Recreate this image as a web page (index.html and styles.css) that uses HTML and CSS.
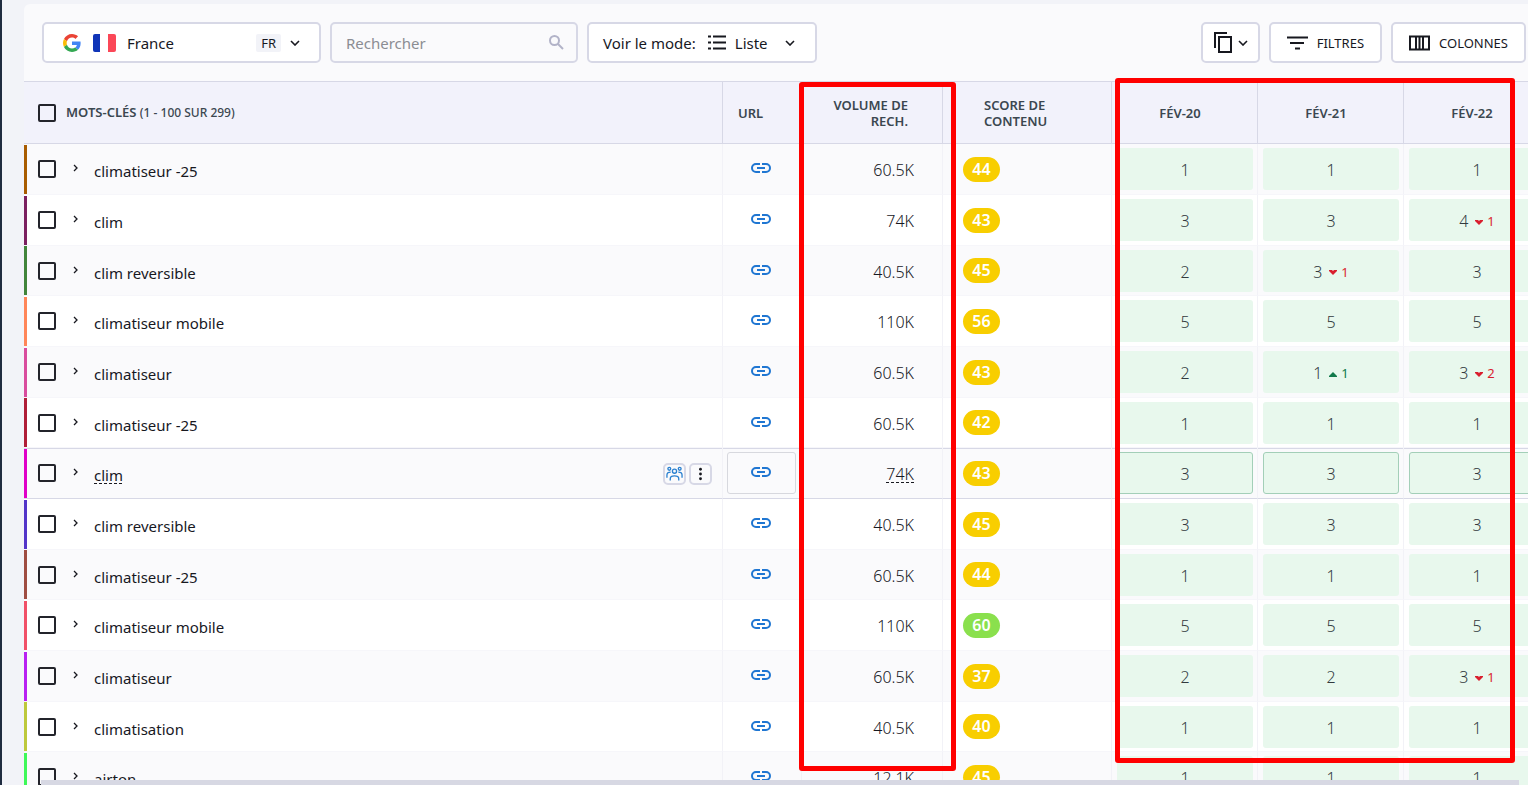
FILE: index.html
```html
<!DOCTYPE html>
<html lang="fr">
<head>
<meta charset="utf-8">
<title>Mots-clés</title>
<link rel="stylesheet" href="styles.css">
</head>
<body>
<svg class="sprite" aria-hidden="true">
  <symbol id="link" viewBox="0 0 20 10"><path d="M9 1H5a4 4 0 0 0 0 8h4M11 1h4a4 4 0 0 1 0 8h-4M6 5h8" fill="none" stroke="currentColor" stroke-width="2"/></symbol>
  <symbol id="right" viewBox="0 0 6 8"><path d="M1 1l3 3-3 3" fill="none" stroke="currentColor" stroke-width="1.3"/></symbol>
  <symbol id="down" viewBox="0 0 10 6"><path d="M1 1l4 4 4-4" fill="none" stroke="currentColor" stroke-width="1.6"/></symbol>
  <symbol id="fall" viewBox="0 0 8 5"><path d="M0 0h3l1 1 1-1h3v1L4 5 0 1z" fill="currentColor"/></symbol>
  <symbol id="rise" viewBox="0 0 8 5"><path d="M0 5h8V4L4 0 0 4z" fill="currentColor"/></symbol>
</svg>
<main class="panel">
  <form class="toolbar">
    <div class="field country">
      <svg class="google" viewBox="0 0 48 48" aria-hidden="true"><path fill="#ea4335" d="M24 9.500c3.540 0 6.710 1.220 9.210 3.600l6.850-6.850C35.900 2.380 30.470 0 24 0 14.620 0 6.510 5.380 2.560 13.220l7.980 6.190C12.430 13.720 17.740 9.500 24 9.500z"/><path fill="#4285f4" d="M46.980 24.550c0-1.570-.15-3.090-.38-4.550H24v9.020h12.940c-.58 2.960-2.260 5.480-4.780 7.180l7.730 6c4.510-4.180 7.090-10.360 7.090-17.650z"/><path fill="#fbbc05" d="M10.530 28.590A14.500 14.500 0 0 1 9.770 24c0-1.600.27-3.140.76-4.590l-7.980-6.190A24 24 0 0 0 0 24c0 3.880.92 7.540 2.560 10.780z"/><path fill="#34a853" d="M24 48c6.480 0 11.930-2.130 15.890-5.810l-7.730-6c-2.150 1.450-4.920 2.300-8.160 2.300-6.260 0-11.570-4.220-13.470-9.910l-7.980 6.190C6.510 42.620 14.620 48 24 48z"/></svg>
      <svg class="flag" viewBox="0 0 23 18" aria-hidden="true"><rect width="23" height="18" rx="2" fill="#fff"/><path d="M7 0H2a2 2 0 0 0-2 2v14a2 2 0 0 0 2 2h5z" fill="#1035b8"/><path d="M15 0h6a2 2 0 0 1 2 2v14a2 2 0 0 1-2 2h-6z" fill="#fb4757"/></svg>
      <select aria-label="Pays"><option>France</option></select>
      <span class="code">FR</span>
      <svg class="caret" aria-hidden="true"><use href="#down"/></svg>
    </div>
    <div class="field search">
      <input type="search" placeholder="Rechercher" aria-label="Rechercher">
      <svg class="loupe" viewBox="0 0 15 15" aria-hidden="true"><circle cx="5.500" cy="5.500" r="4.500"/><path d="M9 9l5 5"/></svg>
    </div>
    <div class="field mode">
      <label for="mode">Voir le mode:</label>
      <svg class="list" viewBox="0 0 18 15" aria-hidden="true"><path d="M0 1.500h3M5 1.500h13M0 7.500h3M5 7.500h13M0 13.500h3M5 13.500h13"/></svg>
      <select id="mode"><option>Liste</option></select>
      <svg class="caret" aria-hidden="true"><use href="#down"/></svg>
    </div>
    <div class="actions">
      <button type="button" class="field copy" aria-label="Copier"><svg class="sheets" viewBox="0 0 18 21" aria-hidden="true"><path d="M1 16V1h12"/><rect x="5" y="5" width="12" height="15"/></svg><svg class="caret" aria-hidden="true"><use href="#down"/></svg></button>
      <button type="button" class="field"><svg class="filter" viewBox="0 0 21 14" aria-hidden="true"><path d="M0 1.500h21M3 7h14M8 12.500h5"/></svg>FILTRES</button>
      <button type="button" class="field"><svg class="cols" viewBox="0 0 21 16" aria-hidden="true"><path d="M1 1.500h19v13H1zM7 1v14M14 1v14M10.500 1v14"/></svg>COLONNES</button>
    </div>
  </form>
  <div class="scroller">
    <table>
      <colgroup><col><col class="w-url"><col class="w-volume"><col class="w-score"><col class="w-date"><col class="w-date"><col class="w-date"></colgroup>
      <thead><tr>
        <th><div class="all"><input type="checkbox" aria-label="Tout sélectionner"><span>MOTS-CLÉS <small>(1 - 100 SUR 299)</small></span></div></th>
        <th class="h-url">URL</th>
        <th class="h-volume">VOLUME DE RECH.</th>
        <th class="h-score">SCORE DE<br>CONTENU</th>
        <th class="h-date">FÉV-20</th><th class="h-date">FÉV-21</th><th class="h-date">FÉV-22</th>
      </tr></thead>
      <tbody id="rows"></tbody>
    </table>
  </div>
</main>
<div class="scrollbar"></div>
<div class="mark mark-volume"></div>
<div class="mark mark-dates"></div>
<script src="rows.js"></script>
</body>
</html>
```

FILE: rows.js
```js
const rows = [
  ["climatiseur -25", "60.5K", 44, ["1", "1", "1"], "#a85c00"],
  ["clim", "74K", 43, ["3", "3", "4 -1"], "#7b2060"],
  ["clim reversible", "40.5K", 45, ["2", "3 -1", "3"], "#41853b"],
  ["climatiseur mobile", "110K", 56, ["5", "5", "5"], "#ff8659"],
  ["climatiseur", "60.5K", 43, ["2", "1 +1", "3 -2"], "#d94c9e"],
  ["climatiseur -25", "60.5K", 42, ["1", "1", "1"], "#b01e38"],
  ["clim", "74K", 43, ["3", "3", "3"], "#e000c8"],
  ["clim reversible", "40.5K", 45, ["3", "3", "3"], "#5335c9"],
  ["climatiseur -25", "60.5K", 44, ["1", "1", "1"], "#9f4d42"],
  ["climatiseur mobile", "110K", 60, ["5", "5", "5"], "#f15068"],
  ["climatiseur", "60.5K", 37, ["2", "2", "3 -1"], "#b820f2"],
  ["climatisation", "40.5K", 40, ["1", "1", "1"], "#bdc93c"],
  ["airton", "12.1K", 45, ["1", "1", "1"], "#3ff859"]
];
const active = 6;
const tools = `<button type="button" class="tool" aria-label="Concurrents"><svg viewBox="0 0 18 16"><g fill="none" stroke="#2a80d0" stroke-width="1.400"><circle cx="3.500" cy="2.500" r="1.500"/><circle cx="14.500" cy="2.500" r="1.500"/><circle cx="9" cy="5" r="2.200"/><path d="M4.500 15v-2q0-3 4.500-3t4.500 3v2M1 12V9q0-3 4-3M17 12V9q0-3-4-3"/></g></svg></button>
<button type="button" class="tool" aria-label="Plus"><svg viewBox="0 0 18 16"><g fill="#17181f"><circle cx="9" cy="3" r="1.500"/><circle cx="9" cy="8" r="1.500"/><circle cx="9" cy="13" r="1.500"/></g></svg></button>`;

function rank(value) {
  const [position, change] = value.split(" ");
  if (!change) return position;
  const kind = change[0] === "-" ? "fall" : "rise";
  return `${position}<span class="change ${kind}"><svg aria-hidden="true"><use href="#${kind}"/></svg>${change.slice(1)}</span>`;
}

document.getElementById("rows").innerHTML = rows.map(([name, volume, score, dates, color], i) => `
<tr${i === active ? ' class="active"' : ""}>
  <td><div class="name"><i style="background:${color}"></i><input type="checkbox" aria-label="${name}"><button type="button" class="expand" aria-label="Développer"><svg aria-hidden="true"><use href="#right"/></svg></button><span class="text">${name}</span>${i === active ? `<div class="tools">${tools}</div>` : ""}</div></td>
  <td><a class="url" href="#" aria-label="URL"><svg aria-hidden="true"><use href="#link"/></svg></a></td>
  <td class="c-volume"><span class="text">${volume}</span></td>
  <td class="c-score"><span class="score${score >= 60 ? " good" : ""}">${score}</span></td>
  ${dates.map(d => `<td><div class="rank">${rank(d)}</div></td>`).join("")}
</tr>`).join("");
```

FILE: styles.css
```css
* { box-sizing: border-box; }
html, body { height: 100%; }
body {
  margin: 0;
  padding: 4px 0 0 22px;
  border-left: 2px solid #1f2c40;
  background: #f2f3f8;
  color: #17181f;
  font: 15px/20px "Noto Sans", sans-serif;
  overflow: hidden;
  position: relative;
}
svg { display: block; flex: none; }
button, input, select { font: inherit; color: inherit; }
button { cursor: pointer; }
.sprite { display: none; }
.panel {
  height: 100%;
  display: flex;
  flex-direction: column;
  background: #fafafc;
  border-radius: 6px 0 0 0;
  overflow: hidden;
}

.toolbar { display: flex; gap: 9px; padding: 18px 2px 18px 18px; }
.field {
  display: flex;
  align-items: center;
  height: 41px;
  border: 2px solid #d7d8e6;
  border-radius: 5px;
  background: #fff;
}
.field select {
  appearance: none;
  border: 0;
  padding: 0;
  background: none;
  outline: 0;
}
.caret { width: 10px; height: 6px; }
.country { width: 279px; padding: 0 19px 0 19px; }
.country select { flex: 1; margin-left: 11px; }
.google { width: 18px; height: 18px; }
.flag { width: 23px; height: 18px; margin-left: 12px; }
.code {
  margin-right: 9px;
  padding: 0 5px;
  border-radius: 2px;
  background: #f2f3f8;
  font-size: 13px;
  line-height: 18px;
}
.search { width: 248px; padding: 0 12px 0 14px; background: #fafafc; }
.search input {
  flex: 1;
  min-width: 0;
  border: 0;
  padding: 0;
  background: none;
  outline: 0;
}
.search input::placeholder { color: #8b8d93; opacity: 1; }
.loupe { width: 15px; height: 15px; fill: none; stroke: #b2b3c8; stroke-width: 2; }
.mode { width: 230px; padding: 0 20px 0 14px; }
.mode select { flex: 1; margin-left: 9px; }
.list { width: 18px; height: 15px; margin-left: 12px; stroke: #17181f; stroke-width: 2; }
.actions { display: flex; gap: 9px; margin-left: auto; }
.actions .field { padding: 0 16px; font-size: 13px; gap: 9px; }
.actions .copy { padding: 0 10px 0 11px; gap: 6px; }
.sheets { width: 18px; height: 21px; fill: none; stroke: #17181f; stroke-width: 2; }
.filter { width: 21px; height: 14px; stroke: #17181f; stroke-width: 2; }
.cols { width: 21px; height: 16px; fill: none; stroke: #17181f; stroke-width: 2; }

.scroller { flex: 1; overflow: hidden; }
table {
  width: calc(100% + 22px);
  table-layout: fixed;
  border-collapse: separate;
  border-spacing: 0;
}
.w-url { width: 79px; }
.w-volume { width: 141px; }
.w-score { width: 169px; }
.w-date { width: 146px; }
th {
  height: 63px;
  padding: 0;
  border: solid #d7d8e6;
  border-width: 1px 1px 1px 0;
  background: #f2f2fb;
  color: #3b4750;
  font-size: 13px;
  font-weight: 600;
  line-height: 16px;
  text-align: left;
}
th small { font-size: 12px; font-weight: 500; }
.all { display: flex; align-items: center; gap: 10px; padding-left: 14px; }
.h-url { padding-left: 15px; }
.h-volume { padding: 0 34px 0 24px; text-align: right; }
.h-score { padding-left: 41px; }
.h-date { padding-right: 9px; text-align: center; }

input[type="checkbox"] {
  appearance: none;
  flex: none;
  width: 18px;
  height: 18px;
  margin: 0;
  border: 2px solid #23242b;
  border-radius: 2px;
}
td {
  height: 51px;
  padding: 0;
  border-right: 1px solid #f2f2f7;
  border-bottom: 1px solid #f6f6fa;
}
tr:nth-child(even) td { background: #fff; }
tr:nth-child(3n) td { height: 50px; }
.name { display: flex; align-items: center; padding-right: 10px; }
.name i { width: 3px; height: 49px; margin-right: 11px; }
.expand { margin-left: 9px; padding: 5px 8px 7px; border: 0; background: none; }
.expand svg { width: 6px; height: 8px; }
.name .text { margin-left: 7px; padding-top: 4px; }
.tools { display: flex; gap: 3px; margin-left: auto; padding-top: 1px; }
.tool {
  padding: 1px;
  border: 2px solid #d7d8e6;
  border-radius: 5px;
  background: #fafafc;
}
.tool svg { width: 17px; height: 16px; }
.url {
  display: flex;
  align-items: center;
  justify-content: center;
  height: 42px;
  margin: 0 5px 0 4px;
  padding: 0 2px 2px 0;
  border: 1px solid transparent;
  border-radius: 3px;
  color: #1f76d2;
}
.url svg { width: 20px; height: 10px; }
.c-volume { padding: 2px 28px 0 0; font-size: 16px; font-weight: 300; text-align: right; }
.c-score { padding-left: 20px; }
.score {
  display: block;
  width: 37px;
  border-radius: 13px;
  background: #f8ce00;
  color: #fff;
  font-size: 16px;
  font-weight: 600;
  line-height: 25px;
  text-align: center;
}
.good { background: #8ae04d; }
.rank {
  display: flex;
  align-items: center;
  justify-content: center;
  height: 42px;
  margin: 0 4px 0 5px;
  padding-top: 2px;
  border: 1px solid transparent;
  border-radius: 3px;
  background: #e8f8ed;
  color: #323a3e;
  font-size: 16px;
  font-weight: 300;
}
.change { display: flex; align-items: center; gap: 4px; margin-left: 7px; font-size: 13px; font-weight: 400; }
.change svg { width: 8px; height: 5px; margin-top: 2px; }
.fall { color: #d91f2e; }
.rise { color: #117a4b; }
.active td { border-bottom-color: #d7d8e6; box-shadow: inset 0 1px #d7d8e6; }
.active .url { border-color: #d7d8de; }
.active .rank { border-color: #a3cfb8; }
.active .text { text-decoration: underline dashed 1px; text-underline-offset: 2px; }

.scrollbar {
  position: absolute;
  right: 9px;
  bottom: 0;
  left: 39px;
  height: 5px;
  background: #d7d8e3;
}
.mark { position: absolute; border: 5px solid #f00; border-radius: 3px; }
.mark-volume { top: 82px; right: 572px; width: 157px; height: 689px; }
.mark-dates { top: 78px; right: 13px; width: 400px; height: 685px; }
```
